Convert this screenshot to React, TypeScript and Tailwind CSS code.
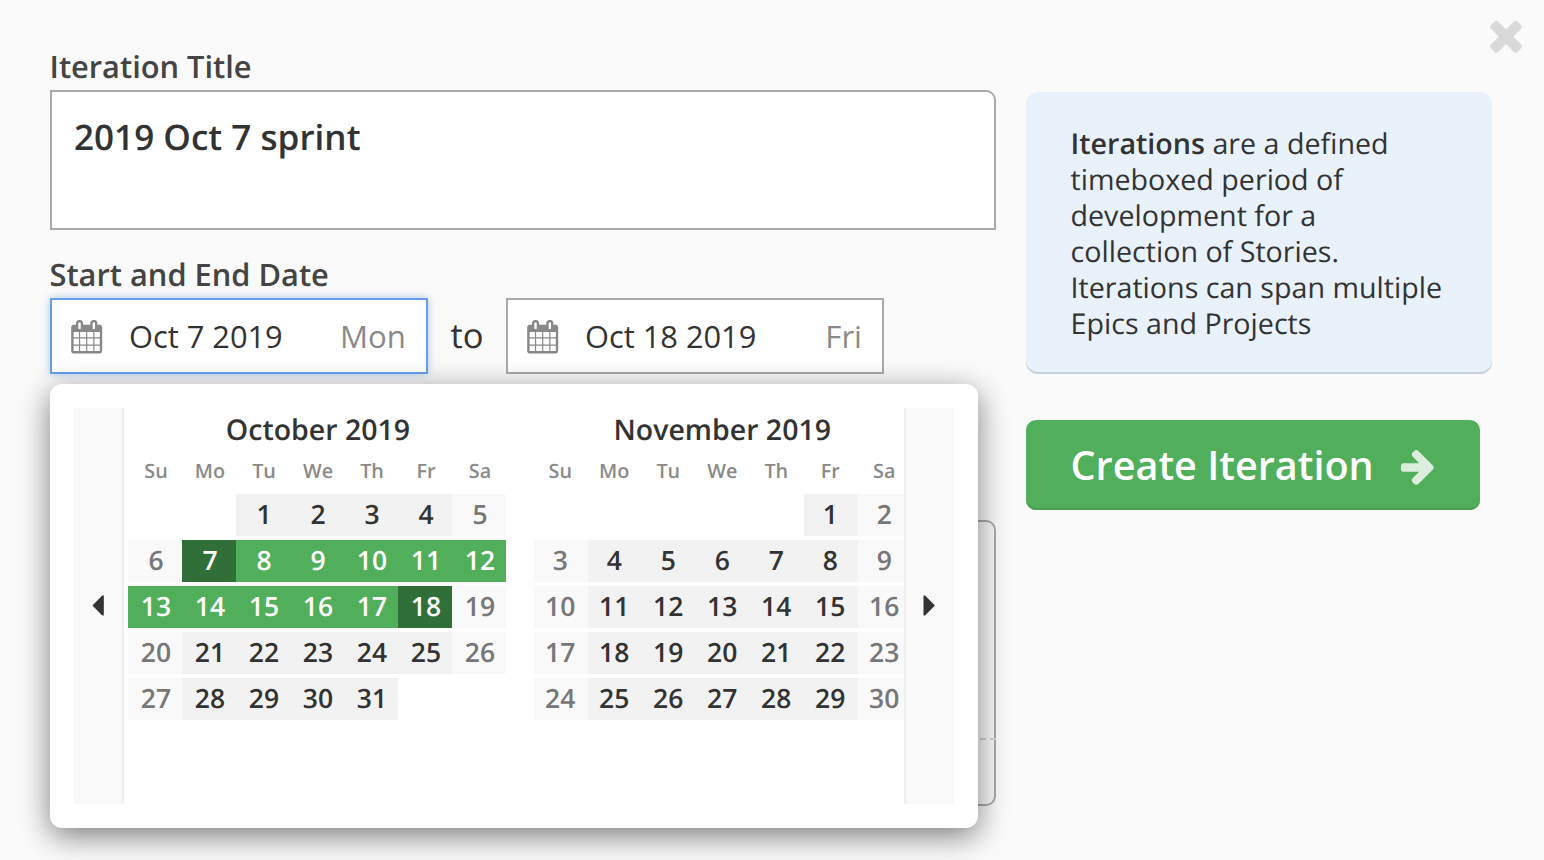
import clsx from "clsx";

const WEEKDAYS = ["Su", "Mo", "Tu", "We", "Th", "Fr", "Sa"];

type MonthData = {
  name: string;
  offset: number;
  days: number;
  start?: number;
  end?: number;
};

const OCTOBER: MonthData = { name: "October 2019", offset: 2, days: 31, start: 7, end: 18 };
const NOVEMBER: MonthData = { name: "November 2019", offset: 5, days: 30 };

function Icon({ d, className }: { d: string; className: string }) {
  return (
    <svg viewBox="0 0 1792 1792" className={clsx("shrink-0 fill-current", className)} aria-hidden="true">
      <path d={d} />
    </svg>
  );
}

const CALENDAR =
  "M192 1664h288v-288h-288v288zm352 0h320v-288h-320v288zm-352-352h288v-320h-288v320zm352 0h320v-320h-320v320zm-352-384h288v-288h-288v288zm736 736h320v-288h-320v288zm-384-736h320v-288h-320v288zm768 736h288v-288h-288v288zm-384-352h320v-320h-320v320zm-352-864v-288q0-13-9.5-22.5t-22.5-9.5h-64q-13 0-22.5 9.5t-9.5 22.5v288q0 13 9.5 22.5t22.5 9.5h64q13 0 22.5-9.5t9.5-22.5zm736 864h288v-320h-288v320zm-384-384h320v-288h-320v288zm384 0h288v-288h-288v288zm32-480v-288q0-13-9.5-22.5t-22.5-9.5h-64q-13 0-22.5 9.5t-9.5 22.5v288q0 13 9.5 22.5t22.5 9.5h64q13 0 22.5-9.5t9.5-22.5zm384-64v1280q0 52-38 90t-90 38h-1408q-52 0-90-38t-38-90v-1280q0-52 38-90t90-38h128v-96q0-66 47-113t113-47h64q66 0 113 47t47 113v96h384v-96q0-66 47-113t113-47h64q66 0 113 47t47 113v96h128q52 0 90 38t38 90z";
const ARROW_RIGHT =
  "M1600 960q0 54-37 91l-651 651q-39 37-91 37-51 0-90-37l-75-75q-38-38-38-91t38-91l293-293h-704q-52 0-84.5-37.5t-32.5-90.5v-128q0-53 32.5-90.5t84.5-37.5h704l-293-294q-38-36-38-90t38-90l75-75q38-38 90-38 53 0 91 38l651 651q37 35 37 90z";
const TIMES =
  "M1490 1322q0 40-28 68l-136 136q-28 28-68 28t-68-28l-294-294-294 294q-28 28-68 28t-68-28l-136-136q-28-28-28-68t28-68l294-294-294-294q-28-28-28-68t28-68l136-136q28-28 68-28t68 28l294 294 294-294q28-28 68-28t68 28l136 136q28 28 28 68t-28 68l-294 294 294 294q28 28 28 68z";

function DateField({ value, day, active }: { value: string; day: string; active?: boolean }) {
  return (
    <button
      className={clsx(
        "flex h-[76px] w-[378px] items-center border-2 bg-white pr-[20px] pl-[18px] text-left",
        active ? "border-[#659fe8] shadow-[0_0_8px_rgba(101,159,232,0.55)]" : "border-[#aaa]",
      )}
    >
      <Icon d={CALENDAR} className="mt-0.5 size-[33.4px] text-[#888]" />
      <span className="ml-[25.600px] flex-1 text-[30.8px] text-[#333]">{value}</span>
      <span className="text-[31.2px] text-[#8a8a8a]">{day}</span>
    </button>
  );
}

function Month({ month, shift }: { month: MonthData; shift: string }) {
  const cells = [
    ...Array.from({ length: month.offset }, () => 0),
    ...Array.from({ length: month.days }, (_, i) => i + 1),
  ];
  return (
    <div className="w-[378px] shrink-0 font-semibold">
      <h3 className={clsx("h-[42px] text-center text-[28.5px] leading-[44px] text-[#333]", shift)}>{month.name}</h3>
      <div className="grid h-11 grid-cols-7 text-center text-[19.8px] leading-[41px] text-[#8a8a8a]">
        {WEEKDAYS.map((d) => (
          <span key={d} className={shift}>
            {d}
          </span>
        ))}
      </div>
      <div className="grid grid-cols-7 gap-y-1 text-center text-[26.5px] leading-10">
        {cells.map((n, i) => {
          const weekend = i % 7 === 0 || i % 7 === 6;
          const inRange = !!month.start && !!month.end && n >= month.start && n <= month.end;
          const edge = inRange && (n === month.start || n === month.end);
          return (
            <span
              key={i}
              className={clsx(
                "h-[42px]",
                shift,
                edge && "bg-[#306f37] text-white",
                inRange && !edge && "bg-[#51ae5b] text-white",
                n > 0 && !inRange && (weekend ? "bg-[#f9f9f9] text-[#777]" : "bg-[#f2f2f2] text-[#333]"),
              )}
            >
              {n > 0 ? n : ""}
            </span>
          );
        })}
      </div>
    </div>
  );
}

function RangePicker() {
  return (
    <div className="absolute top-[86px] left-0 z-10 flex h-[444px] w-[928px] rounded-xl bg-white p-6 shadow-[0_8px_30px_rgba(0,0,0,0.5)]">
      <button className="flex w-[50px] items-center justify-center border-r-2 border-[#eee] bg-[#f9f9f9]">
        <svg viewBox="0 0 12 22" className="h-[22px] w-3 fill-[#333]" aria-hidden="true">
          <path d="M.9 9.900 10 .7q1.800-1.200 1.800.6v18.300q0 1.800-1.800.6L.9 11q-.5-.55 0-1.100z" />
        </svg>
      </button>
      <div className="flex flex-1 gap-7 overflow-hidden pl-1">
        <Month month={OCTOBER} shift="pl-0.5" />
        <Month month={NOVEMBER} shift="pr-[1.5px]" />
      </div>
      <button className="flex w-[50px] items-center justify-center border-l-2 border-[#eee] bg-[#f9f9f9] pr-0.5">
        <svg viewBox="0 0 12 22" className="h-[22px] w-3 fill-[#333]" aria-hidden="true">
          <path d="M11.400 9.900 2.300.7Q.5-.5.5 1.300v18.300q0 1.800 1.800.6l9.100-9.200q.5-.55 0-1.100z" />
        </svg>
      </button>
    </div>
  );
}

export default function App() {
  return (
    <main className="relative flex h-[860px] w-[1544px] gap-[30px] overflow-hidden bg-[#fafafa] pt-[46px] pl-[50px] font-['Open_Sans',sans-serif] [text-rendering:geometricPrecision]">
      <section className="w-[946px] shrink-0">
        <label className="-ml-[0.5px] block h-11 text-[30.8px] leading-[42px] font-semibold text-[#444]">Iteration Title</label>
        <div className="h-[140px] rounded-tr-[10px] border-2 border-[#aaa] bg-white px-[22px] pt-[21px] text-[35.1px] leading-[48px] font-semibold text-[#333]">
          2019 Oct 7 sprint
        </div>
        <label className="-ml-[0.5px] mt-6 block h-11 text-[30.8px] leading-[42px] font-semibold text-[#444]">Start and End Date</label>
        <div className="relative flex">
          <DateField value="Oct 7 2019" day="Mon" active />
          <span className="w-[78px] text-center text-[34.6px] leading-[75px] text-[#333]">to</span>
          <DateField value="Oct 18 2019" day="Fri" />
          <RangePicker />
        </div>
        <div className="mt-[146px] flex h-[286px] flex-col justify-end rounded-[10px] border-2 border-[#aaa] bg-[#fafafa]">
          <div className="-mx-0.5 h-0.5 bg-[repeating-linear-gradient(90deg,#d4d4d4_0_6px,transparent_6px_10px)]" />
          <div className="h-16" />
        </div>
      </section>
      <aside className="w-[466px] shrink-0 pt-[46px]">
        <p className="h-[280px] rounded-xl bg-[#e9f1fb] pt-[34px] pl-[44.5px] text-[28.650px] leading-9 text-[#333] shadow-[0_2px_0_#c5cfda]">
          <strong className="font-semibold">Iterations</strong> are a defined
          <br />
          timeboxed period of
          <br />
          development for a
          <br />
          collection of Stories.
          <br />
          Iterations can span multiple
          <br />
          Epics and Projects
        </p>
        <button className="mt-12 flex h-[90px] w-[454px] items-center rounded-[10px] bg-[#51ae5b] pl-[44.5px] text-[39.6px] font-semibold text-white shadow-[inset_0_-2px_0_#4a9f53]">
          <span className="leading-[86px]">Create Iteration</span>
          <Icon d={ARROW_RIGHT} className="mt-0.5 ml-[24.500px] size-10 text-white/80" />
        </button>
      </aside>
      <button className="absolute top-[10.500px] left-[1481.500px] text-[#d9d9d9]" aria-label="Close">
        <Icon d={TIMES} className="size-12" />
      </button>
    </main>
  );
}
